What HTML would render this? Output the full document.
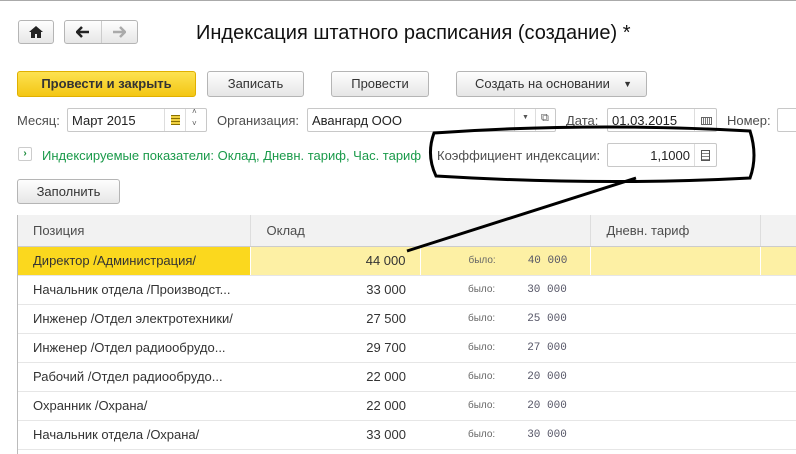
<!DOCTYPE html>
<html><head><meta charset="utf-8"><style>
*{box-sizing:border-box}
body{margin:0;width:796px;height:454px;overflow:hidden;background:#fff;font-family:"Liberation Sans",Arial,sans-serif;font-size:13px;color:#333;position:relative}
.a{position:absolute}
.btn{position:absolute;border:1px solid #b5b5b5;border-radius:3px;background:linear-gradient(#fefefe,#e6e6e6);text-align:center;color:#333;font-size:13px}
.inp{position:absolute;border:1px solid #c8c8c8;border-radius:2px;background:#fff;height:24px}
.lbl{position:absolute;color:#4d4d4d;font-size:13px}
table{border-collapse:collapse;position:absolute;left:17px;top:215px;width:800px;font-size:13px;table-layout:fixed}
td{height:29px;border-bottom:1px solid #e6e6e6;padding:0;color:#333;white-space:nowrap;overflow:hidden}
th{height:31px;background:#f2f2f2;font-weight:normal;text-align:left;color:#4d4d4d;border-right:1px solid #ddd;border-bottom:1px solid #ccc;padding-left:16px}
.n{text-align:right;padding-right:14px}
.b{font-size:10px;color:#666;padding-left:48px}
.v{font-family:"Liberation Mono",monospace;font-size:11px;color:#556;display:inline-block;margin-left:32px}
</style></head><body>
<div class="a" style="left:0;top:0;width:796px;height:1px;background:#aaa"></div>
<div class="btn" style="left:18px;top:20px;width:36px;height:24px"><svg width="14" height="12" style="margin-top:5px" viewBox="0 0 14 12"><path d="M7 0L0 6h2v6h4V8h2v4h4V6h2z" fill="#222"/></svg></div>
<div class="btn" style="left:64px;top:20px;width:74px;height:24px"><svg class="a" style="left:11px;top:5px" width="14" height="12" viewBox="0 0 14 12"><path d="M1 6h12M6 1L1 6l5 5" stroke="#222" stroke-width="2.5" fill="none"/></svg><div class="a" style="left:36px;top:0;width:1px;height:22px;background:#ccc"></div><svg class="a" style="left:47px;top:5px" width="14" height="12" viewBox="0 0 14 12"><path d="M1 6h12M8 1l5 5-5 5" stroke="#aaa" stroke-width="2.5" fill="none"/></svg></div>
<div class="a" style="left:196px;top:22px;font-size:20px;color:#111">Индексация штатного расписания (создание) *</div>
<div class="btn" style="left:17px;top:71px;width:179px;height:26px;background:linear-gradient(#fde251,#f3c614);border-color:#e0b000;font-weight:bold;line-height:24px">Провести и закрыть</div>
<div class="btn" style="left:207px;top:71px;width:97px;height:26px;line-height:24px">Записать</div>
<div class="btn" style="left:331px;top:71px;width:98px;height:26px;line-height:24px">Провести</div>
<div class="btn" style="left:456px;top:71px;width:191px;height:26px;line-height:24px;text-align:left;padding-left:18px">Создать на основании <span style="position:absolute;right:14px;top:0;font-size:9px">▼</span></div>
<div class="lbl" style="left:17px;top:113px">Месяц:</div>
<div class="inp" style="left:67px;top:108px;width:140px"><span class="a" style="left:4px;top:4px;color:#222">Март 2015</span><div class="a" style="left:96px;top:0;width:1px;height:22px;background:#ddd"></div><div class="a" style="left:103px;top:6px;width:9px;height:10px;background:repeating-linear-gradient(#8a7000 0 1px,#f0d040 1px 3px)"></div><div class="a" style="left:117px;top:0;width:1px;height:22px;background:#ddd"></div><span class="a" style="left:124px;top:-2px;font-size:8px;color:#555">˄</span><span class="a" style="left:124px;top:10px;font-size:8px;color:#555">˅</span></div>
<div class="lbl" style="left:217px;top:113px">Организация:</div>
<div class="inp" style="left:307px;top:108px;width:249px"><span class="a" style="left:4px;top:4px;color:#222">Авангард ООО</span><div class="a" style="left:206px;top:0;width:1px;height:22px;background:#ddd"></div><span class="a" style="left:214px;top:5px;font-size:7px;color:#555">▼</span><div class="a" style="left:227px;top:0;width:1px;height:22px;background:#ddd"></div><span class="a" style="left:233px;top:3px;font-size:11px;color:#555">⧉</span></div>
<div class="lbl" style="left:566px;top:113px">Дата:</div>
<div class="inp" style="left:607px;top:108px;width:110px"><span class="a" style="left:4px;top:4px;color:#222">01.03.2015</span><div class="a" style="left:86px;top:0;width:1px;height:22px;background:#ddd"></div><div class="a" style="left:93px;top:8px;width:11px;height:8px;border:1px solid #666;background:repeating-linear-gradient(90deg,#fff 0 1px,#777 1px 2px)"></div></div>
<div class="lbl" style="left:727px;top:113px">Номер:</div>
<div class="inp" style="left:777px;top:108px;width:30px"></div>
<div class="a" style="left:18px;top:147px;width:14px;height:14px;border:1px solid #ccc;border-radius:2px;color:#1a8a3a;font-size:10px;line-height:12px;text-align:center;font-weight:bold">›</div>
<div class="a" style="left:42px;top:148px;color:#1a9a4a;font-size:13px">Индексируемые показатели: Оклад, Дневн. тариф, Час. тариф</div>
<div class="lbl" style="left:437px;top:148px">Коэффициент индексации:</div>
<div class="inp" style="left:607px;top:143px;width:110px"><span class="a" style="right:26px;top:4px;color:#222">1,1000</span><div class="a" style="left:86px;top:0;width:1px;height:22px;background:#ddd"></div><div class="a" style="left:93px;top:6px;width:9px;height:11px;border:1px solid #555;background:repeating-linear-gradient(#fff 0 2px,#888 2px 3px)"></div></div>
<div class="btn" style="left:17px;top:179px;width:103px;height:25px;line-height:23px">Заполнить</div>
<table>
<colgroup><col style="width:233px"><col style="width:170px"><col style="width:170px"><col style="width:170px"><col style="width:57px"></colgroup>
<tr><th>Позиция</th><th colspan="2">Оклад</th><th>Дневн. тариф</th><th></th></tr>
<tr style="background:#fdf0a4"><td style="background:#fbd81e;padding-left:16px;border-right:1px solid #fff">Директор /Администрация/</td><td class="n" style="border-right:1px solid #fff">44 000</td><td class="b">было:<span class="v">40 000</span></td><td style="border-left:1px solid #fff;border-right:1px solid #fff"></td><td></td></tr>
<tr><td style="padding-left:16px">Начальник отдела /Производст...</td><td class="n">33 000</td><td class="b">было:<span class="v">30 000</span></td><td></td><td></td></tr>
<tr><td style="padding-left:16px">Инженер /Отдел электротехники/</td><td class="n">27 500</td><td class="b">было:<span class="v">25 000</span></td><td></td><td></td></tr>
<tr><td style="padding-left:16px">Инженер /Отдел радиообрудо...</td><td class="n">29 700</td><td class="b">было:<span class="v">27 000</span></td><td></td><td></td></tr>
<tr><td style="padding-left:16px">Рабочий /Отдел радиообрудо...</td><td class="n">22 000</td><td class="b">было:<span class="v">20 000</span></td><td></td><td></td></tr>
<tr><td style="padding-left:16px">Охранник /Охрана/</td><td class="n">22 000</td><td class="b">было:<span class="v">20 000</span></td><td></td><td></td></tr>
<tr><td style="padding-left:16px">Начальник отдела /Охрана/</td><td class="n">33 000</td><td class="b">было:<span class="v">30 000</span></td><td></td><td></td></tr>
</table>
<div class="a" style="left:17px;top:215px;width:1px;height:239px;background:#bbb"></div>
<svg class="a" style="left:0;top:0" width="796" height="454"><path d="M434 133 Q590 122 750 131 Q758 156 750 178 Q600 186 436 176 Q426 155 434 133Z" fill="none" stroke="#000" stroke-width="3"/><line x1="636" y1="178" x2="407" y2="251" stroke="#000" stroke-width="3"/></svg>
</body></html>
